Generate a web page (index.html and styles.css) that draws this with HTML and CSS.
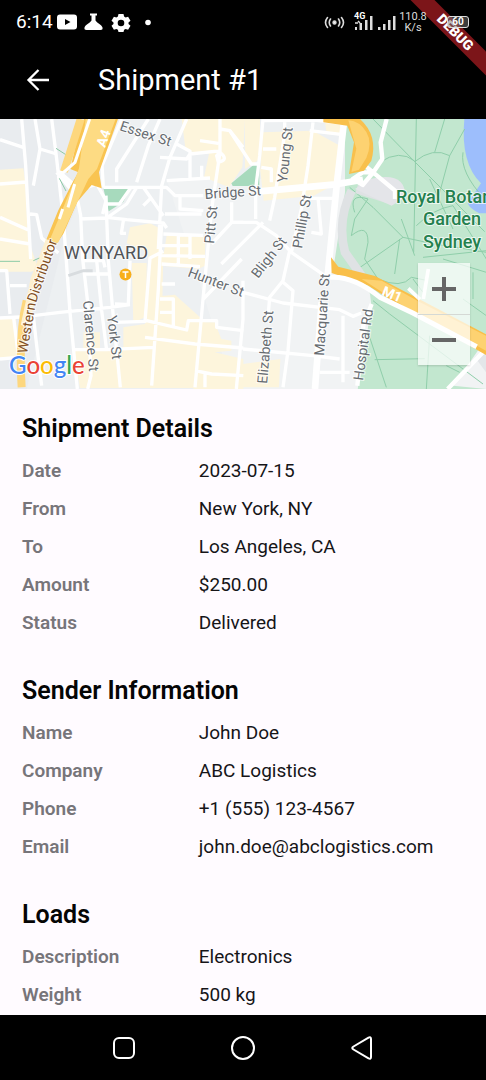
FILE: index.html
```html
<!DOCTYPE html>
<html lang="en">
<head>
<meta charset="utf-8">
<meta name="viewport" content="width=device-width, initial-scale=1">
<title>Shipment #1</title>
<link rel="stylesheet" href="styles.css">
</head>
<body>
<div class="screen">
  <div class="debug-clip" aria-hidden="true">
    <span class="debug">DEBUG</span>
  </div>
  <div class="status-bar">
    <div class="status-group">
      <span class="clock">6:14</span>
      <svg class="status-icons" width="100" height="20" viewBox="0 0 100 20" aria-hidden="true">
        <path fill="#fff" fill-rule="evenodd" d="M4 2.500h14q3 0 3 3v9q0 3-3 3H4q-3 0-3-3v-9q0-3 3-3zM9 7v6l5.500-3z"/>
        <path fill="#fff" d="M34 1.500h7v2h-1.500v5c2 3 6 4 7 7q.5 2.500-2 2.500h-14q-2.500 0-2-2.500c1-3 5-4 7-7v-5H34z"/>
        <path fill="#fff" fill-rule="evenodd" d="M62.500 2h5l.6 2.600 1.500.9 2.500-.8 2.400 4-2 1.800v1.500l2 1.800-2.400 4-2.500-.8-1.500.8-.6 2.200h-5l-.6-2.200-1.500-.8-2.500.8-2.400-4 2-1.800v-1.500l-2-1.800 2.400-4 2.500.8 1.500-.9zM65 7.700a3.300 3.300 0 1 0 0 6.600 3.300 3.300 0 0 0 0-6.600z"/>
        <circle cx="92" cy="10.500" r="2.800" fill="#fff"/>
      </svg>
    </div>
    <div class="status-group">
      <svg width="76" height="24" viewBox="0 0 76 24" aria-hidden="true">
        <g fill="none" stroke="#ddd" stroke-width="1.600" stroke-linecap="round">
          <circle cx="11.500" cy="12.500" r="1.400" fill="#fff"/>
          <path d="M7.500 9q-2.500 3.500 0 7M15.500 9q2.500 3.500 0 7M4.500 7.500q-4 5 0 10M18.500 7.500q4 5 0 10"/>
        </g>
        <g fill="#ddd"><path d="M32 17h2v3h-2zM36.500 13h2.500v7h-2.500zM42 10h2.500v10H42zM47 6h2.500v14H47zM55 17h2.500v3H55zM60 14h2.500v6H60zM65 10h2.500v10H65zM70 6h2.500v14H70z"/></g>
        <text x="31" y="9" class="tiny-label">4G</text>
        <path d="M32 13h3M35 11l2 2" stroke="#ddd" stroke-width="1.500"/>
      </svg>
      <span class="net-speed">110.8<br>K/s</span>
      <span class="battery">60</span>
    </div>
  </div>
  <header class="app-bar">
    <button class="back" type="button" aria-label="Back">
      <svg width="24" height="24" viewBox="0 0 24 24" fill="none" stroke="#fff" stroke-width="2.300"><path d="M23 12H3M12.500 2 2.500 12l10 10"/></svg>
    </button>
    <h1 class="title">Shipment #1</h1>
  </header>

  <main class="content">
    <div class="map">
      <svg class="map-canvas" viewBox="0 0 1458 810" preserveAspectRatio="xMidYMid slice" role="img" aria-label="Map of Sydney near Wynyard">
        <rect width="1458" height="810" fill="#edf0f2"/>
        <path fill="#e9ecef" d="M0 0h350L200 330 80 810H0z"/>
        <path fill="#f1f3f4" d="M500 180h700v630H700z"/>
        <g fill="#fdf5dc">
          <path d="M0 152l70-4 6 40 8 170 30 90-20 10H0zM0 600l48 0 8 115L0 720zM390 325l60-12 38 20-8 80-100-40zM395 432h45v160l-40 20zM445 400l45 0-4 200-48 10zM220 695l30-5v-50l50 0v50l70-5V625l65-10 10-80 80-8 100 90-20 190H240zM500 350l115 5 0 85-20 10-110-10zM600 610l44 0 20 50 30 5v30l-50 5 86 20v90H580zM545 0h190l-8 145-40 60-75-30 15-70-70-10zM735 0h45v120l-45 30zM1160 800z"/>
          <path d="M788 40l150-5 90 50-12 105-75 40-150 15-10-90zM729 735l112-15-4 85H729zM975 10l55 5v35l-50-5z"/>
        </g>
        <path fill="#c2e7cf" d="M1035 0h423v810h-385l40-240-80-100-30-40 32-210z"/>
        <path fill="#f1f3f4" d="M1000 480q90-20 110 45l5 40-33 170-10 75H940zM1360 800l98-140v150z"/>
        <path fill="#e3e6e9" d="M1425 715l33 45v-75z"/>
        <path fill="#9dbefc" d="M1393 0h65v283l-20 0q-30-15-35-30l40-60q-62-60-50-193z"/>
        <path fill="#a7dabd" d="M310 207h82l-22 42-44 28zM694 193l70-58 14 4v62l-80 0z"/>
        <g transform="translate(729 0)" fill="none" stroke="#8fceaa" stroke-width="3">
          <path d="M390 0l125 128 210 210M515 128q55-45 105-18l-38 140M410 130q60-40 105-4M520 0l-8 400M605 0l-30 100M665 30l-45 80M660 100q-10 60 65 140M320 205l70 60 90 90 95 20 155 25M480 355L330 460M475 300l40 110M335 280q-20-60 40-40l-40 60-10 50q50-40 50 20l-10 50 40 60q70 30 100-5l50 10M470 360l-15 105M510 480l30 40M390 545l50 40 280 210M375 640l55 165M395 722l150-3M560 650l-10 160M610 740l40 20M540 415l190-20M600 420l130 40M690 460v80M660 540l70 50M520 320q50-50 110-60l100 160M560 180l70 150"/>
        </g>
        <path d="M1055 215q-45 90-20 185l50 70M1070 210l95 30" fill="none" stroke="#dfe2e4" stroke-width="26"/>
        <path d="M1110 180q110-25 105 55l-40 25-110-50" fill="#e4e5e9"/>
        <g fill="none" stroke="#fff" stroke-width="10" stroke-linejoin="round">
          <path d="M65 0l12 140 15 280M0 62l72 24M0 195l80-6M105 0l15 90-20 110M120 90l50 15M155 0l15 120 20 180 20 280 22 230M270 0l-40 130-50 30 40 35M170 160l50 60 70-25 28 50-10 40M230 230l12 60 6 130 15 130 10 220-10 40M310 205h190l25 25h85M310 205l-4-65L365 0M350 190v-40l95-150M480 0l-35 80-35 110M318 230l2 65 5 130 16 180 20 200M318 255h40l35-50M240 300l80-3 60-42 30-50M320 295l60 7 110 10 10 15M430 205l60 85M455 235l-25 25M370 305l-6 38h14M90 285l20 2 15 70 50 45M0 295l90 40M0 360l90 15M0 455h20l10 130M30 500h50M0 597l60-3M40 590l15 120M100 590l10 90 15 120M0 720l55-5M100 590l80-10 150-15 60-8M250 425h60l5 20M250 465h80M290 425l15 150 15 120M220 692l100 0 140-7M390 425l-5 130M345 610l90-3 15-190 40-20M345 555l45 2M475 390l10-190 25-85L560 0M480 115l80 5 10-15 95-10M530 75l40 22v85M500 185l130-8M605 140v35M600 65l55 8M495 285h110M540 235v35l70 5M490 345l120 4M485 380l85 0M485 435l115 8M535 350v90M570 350v70M485 410l130 2M485 310l-10 200-20 290M485 495h40M480 540h40v85M480 580h40M440 605l120 28 5-28 85 0v20l80 10M435 655l150 20 145 12M660 0v100l-25 170-25 260-25 275M660 30l30 5 39 50M585 755l50 10 95 5M615 765v40M610 540l115-120M635 375l60-65h35M695 250v60M655 130l-5-20q10-15 20 0t-15 20"/>
          <g transform="translate(729 0)"><path d="M60 0L50 110 38 210v90M-40 35L25 135h20M60 5l155-2 85 10M125 5v40l-30 190-15 70M210 10l-15 130-20 130-30 130M200 35l100 12M60 90h40M55 145l30 5v40M-30 310l70 0 60 40 45 50 100 70M60 310L0 370-65 435M140 395l-20 90-40 50-5 60M115 485l35 30-15 180-15 110M0 485L0 600-20 810M0 520l120 32 170 20 40 20 25-10M0 690l210 20 80 10M300 590v200M230 760h90M225 235l10 110-30-5M180 238h90"/></g>
        </g>
        <g fill="none" stroke="#fff" stroke-width="20" stroke-linejoin="round">
          <path d="M779 217l220-20 90-15"/><path d="M1033 0l-22 190-28 280M965 550l-20 260"/><path stroke-width="13" d="M1160 0l-18 70 5 50-27 40-32 38-30-18 30-20 30 0M1095 140l90 75 0 25M1072 800l18-180 25-65M1458 690l-115 120"/>
        </g>
        <path fill="#f9c451" d="M252 0h102l-57 160 8 48-30-10-43 50-42 96-22 33-32-8 39-95 45-88 15-26-24-10 25-110z"/>
        <path fill="#fddb83" d="M257 0h90l-56 150-26 30-90 190-28-2 75-180 15-40z"/>
        <path d="M242 0l-50 158M80 545q-25 100-15 260" fill="none" stroke="#fdd77e" stroke-width="24"/>
        <path d="M150 365L105 480 75 620" fill="none" stroke="#fdf0cf" stroke-width="26"/>
        <path d="M269 0L225 130l-40 35 25 35M224 195l-20 70M188 270l-10 30" fill="none" stroke="#fff" stroke-width="9"/>
        <path d="M168 88l28 18M178 178l20 38M0 427h60M100 425l18-8" fill="none" stroke="#8ccba6" stroke-width="3"/>
        <path d="M205 470l45-15 28 0" fill="none" stroke="#d8dcdf" stroke-width="9"/>
        <path fill="#f8c04d" d="M970 0h110q55 50 34 125l-22 30-45 10 15-95-20-50-72-10z"/>
        <path fill="#fdd271" d="M1045 4q35 3 54 35t0 78l-22 35-23 7 15-70z"/>
        <path fill="#f9bf49" d="M993 415l22 28 110 28 125 65 208 110v62L1200 560l-95-60-110-38z"/>
        <path fill="#fdd271" d="M1085 480l60 5 115 65 198 100v45L1210 560z"/>
        <path d="M990 475q70-5 150 60l100 48 190 100" fill="none" stroke="#fff" stroke-width="15"/>
        <path d="M1225 508l35 33M1285 450l-15 90" fill="none" stroke="#fff" stroke-width="11"/>
        <g transform="scale(3)">
        <g class="street">
          <text transform="translate(119 11) rotate(18)">Essex St</text>
          <text transform="translate(205 80) rotate(-4)">Bridge St</text>
          <text transform="translate(287 64) rotate(-84)">Young St</text>
          <text transform="translate(214 125) rotate(-85)">Pitt St</text>
          <text transform="translate(302 130) rotate(-80)">Phillip St</text>
          <text transform="translate(258 160) rotate(-52)">Bligh St</text>
          <text transform="translate(187 157) rotate(21)">Hunter St</text>
          <text transform="translate(267 265) rotate(-85)">Elizabeth St</text>
          <text transform="translate(324 237) rotate(-86)">Macquarie St</text>
          <text transform="translate(363 262) rotate(-82)">Hospital Rd</text>
          <text transform="translate(83 182) rotate(85)">Clarence St</text>
          <text transform="translate(107 197) rotate(83)">York St</text>
        </g>
        <g class="highway-name">
          <text transform="translate(27 235) rotate(-80)">Western</text>
          <text transform="translate(36 184) rotate(-71)">Distributor</text>
        </g>
        <g class="route">
          <text transform="translate(105 29) rotate(-70)">A4</text>
          <text transform="translate(381 176) rotate(22)">M1</text>
        </g>
        <text class="district" x="106" y="140">WYNYARD</text>
        <g class="park"><text x="396" y="84">Royal Botanic</text><text x="452" y="106">Garden</text><text x="452" y="129">Sydney</text></g>
        <circle cx="125.500" cy="155.500" r="6" fill="#f8af1b"/><path d="M122.500 153h6M125.500 153v6" stroke="#fff" stroke-width="1.500"/>
        <text class="google" x="9" y="255"><tspan fill="#4285f4">G</tspan><tspan fill="#ea4335">o</tspan><tspan fill="#fbbc05">o</tspan><tspan fill="#4285f4">g</tspan><tspan fill="#34a853">l</tspan><tspan fill="#ea4335">e</tspan></text>
        </g>
      </svg>
      <div class="zoom">
        <button type="button" aria-label="Zoom in"><svg width="24" height="24" viewBox="0 0 24 24"><path d="M0 12h24M12 0v24" stroke="#666" stroke-width="4"/></svg></button>
        <button type="button" aria-label="Zoom out"><svg width="24" height="24" viewBox="0 0 24 24"><path d="M0 12h24" stroke="#666" stroke-width="4"/></svg></button>
      </div>
    </div>

    <div class="details">
      <section>
        <h2>Shipment Details</h2>
        <dl>
          <div class="row"><dt>Date</dt><dd>2023-07-15</dd></div>
          <div class="row"><dt>From</dt><dd>New York, NY</dd></div>
          <div class="row"><dt>To</dt><dd>Los Angeles, CA</dd></div>
          <div class="row"><dt>Amount</dt><dd>$250.00</dd></div>
          <div class="row"><dt>Status</dt><dd>Delivered</dd></div>
        </dl>
      </section>
      <section>
        <h2>Sender Information</h2>
        <dl>
          <div class="row"><dt>Name</dt><dd>John Doe</dd></div>
          <div class="row"><dt>Company</dt><dd>ABC Logistics</dd></div>
          <div class="row"><dt>Phone</dt><dd>+1 (555) 123-4567</dd></div>
          <div class="row"><dt>Email</dt><dd>john.doe@abclogistics.com</dd></div>
        </dl>
      </section>
      <section>
        <h2>Loads</h2>
        <dl>
          <div class="row"><dt>Description</dt><dd>Electronics</dd></div>
          <div class="row"><dt>Weight</dt><dd>500 kg</dd></div>
        </dl>
      </section>
    </div>
  </main>

  <nav class="nav-bar" aria-label="System">
    <button type="button" aria-label="Recent apps"><svg width="26" height="26" viewBox="0 0 26 26"><rect x="3" y="3" width="20" height="20" rx="5"/></svg></button>
    <button type="button" aria-label="Home"><svg width="26" height="26" viewBox="0 0 26 26"><circle cx="13" cy="13" r="11"/></svg></button>
    <button type="button" aria-label="Back"><svg width="26" height="26" viewBox="0 0 26 26"><path d="M19.500 2.700q2.500-1.200 2.500 1.300v18q0 2.500-2.500 1.300L4.500 14.500q-2.500-1.500 0-3z"/></svg></button>
  </nav>
</div>
</body>
</html>
```
FILE: styles.css
```css
* { box-sizing: border-box; }
body { margin: 0; font-family: Roboto, "Liberation Sans", sans-serif; background: #000; }
button { padding: 0; border: 0; background: none; display: grid; place-items: center; }
svg { display: block; }
h1, h2, dl, dd { margin: 0; }

.screen { position: relative; height: 100vh; display: flex; flex-direction: column; overflow: hidden; }
.status-bar { position: relative; flex: none; height: 44px; padding: 0 17px 0 16px; display: flex; justify-content: space-between; align-items: center; color: #fff; }
.status-group { display: flex; align-items: center; }
.status-icons { margin-left: 3px; }
.clock { font-size: 19px; line-height: 20px; }
.net-speed { width: 28px; font-size: 11px; line-height: 11px; text-align: center; color: #ddd; }
.battery { width: 22px; height: 12px; margin-left: 20px; border: 1px solid #ddd; border-radius: 3px; background: rgba(120, 120, 120, 0.5); font-size: 10px; line-height: 10px; font-weight: 700; text-align: center; }
.tiny-label { font-size: 9px; font-weight: 700; fill: #fff; }

.app-bar { flex: none; height: 75px; padding: 0 26px 3px; display: flex; align-items: center; gap: 48px; color: #fff; }
.title { font-size: 29px; line-height: 36px; font-weight: 400; }

.debug-clip { position: absolute; top: 0; right: 0; width: 90px; height: 90px; overflow: hidden; }
.debug { position: absolute; top: 24px; right: -45px; width: 152px; height: 17px; transform: rotate(45deg); background: #7c1519; color: #fff; font-size: 14px; line-height: 17px; font-weight: 900; text-align: center; }

.content { flex: 1; min-height: 0; overflow: hidden; background: #fffbff; }
.map { position: relative; height: 270px; }
.map-canvas { width: 100%; height: 100%; }
.zoom { position: absolute; right: 16px; bottom: 24px; width: 52px; background: rgba(255, 255, 255, 0.7); box-shadow: 0 1px 2px rgba(0, 0, 0, 0.15); }
.zoom button { width: 100%; height: 51px; }
.zoom button + button { border-top: 1px solid #d5d9d5; }

.street { font-size: 14px; fill: #666b70; }
.street text, .highway-name text, .district, .park text { stroke: #fff; stroke-width: 2px; stroke-opacity: 0.7; paint-order: stroke; }
.highway-name { font-size: 14px; fill: #82501f; }
.route { font-size: 14px; font-weight: 700; fill: #fff; }
.district { font-size: 18px; fill: #505357; text-anchor: middle; }
.park { font-size: 18px; font-weight: 500; fill: #24804e; }
.park text + text { text-anchor: middle; }
.google { font-family: Lato, sans-serif; font-size: 24px; font-weight: 500; stroke: #fff; stroke-width: 2px; paint-order: stroke; }

.details { padding: 23px 22px; display: flex; flex-direction: column; gap: 32px; }
h2 { margin-bottom: 7px; font-size: 25px; line-height: 33px; font-weight: 600; color: #050505; }
section + section h2 { line-height: 33px; }
.row { display: grid; grid-template-columns: 2fr 3fr; align-items: center; min-height: 38px; font-size: 19px; line-height: 24px; }
dt { font-weight: 600; color: #77757a; }
dd { color: #161518; }

.nav-bar { flex: none; height: 65px; padding: 0 64px; display: grid; grid-template-columns: repeat(3, 1fr); align-items: center; }
.nav-bar svg { fill: none; stroke: #fff; stroke-width: 2px; }
```
